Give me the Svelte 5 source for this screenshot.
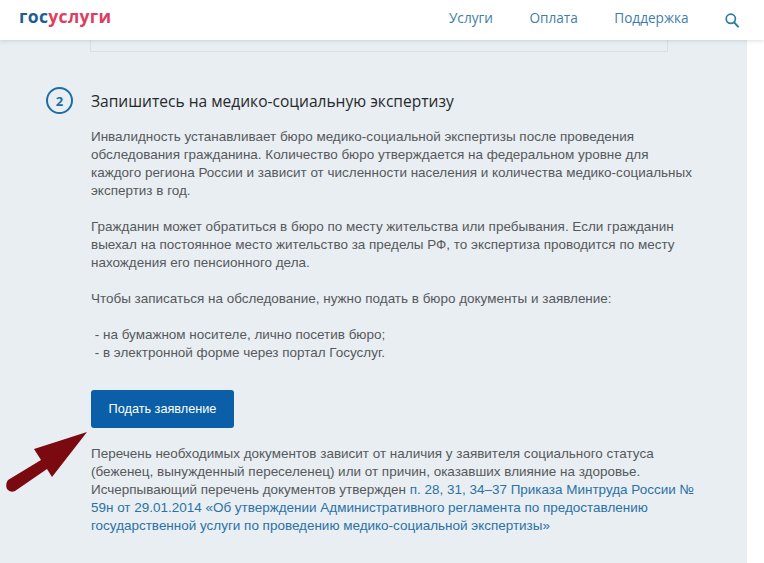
<script>
  const intro = ['Инвалидность устанавливает бюро медико-социальной экспертизы после проведения', 'обследования гражданина. Количество бюро утверждается на федеральном уровне для', 'каждого региона России и зависит от численности населения и количества медико-социальных', 'экспертиз в год.'];
  const place = ['Гражданин может обратиться в бюро по месту жительства или пребывания. Если гражданин', 'выехал на постоянное место жительство за пределы РФ, то экспертиза проводится по месту', 'нахождения его пенсионного дела.'];
</script>

<div class="page">
  <main class="panel">
    <header class="top">
      <div class="logo"><span class="gos">гос</span><span class="usl">услуги</span></div>
      <nav class="nav">
        <span>Услуги</span>
        <span>Оплата</span>
        <span>Поддержка</span>
        <svg class="search" width="14" height="15" viewBox="0 0 14 15" aria-hidden="true">
          <circle cx="5.8" cy="5.8" r="4.6" fill="none" stroke="#2b7ba5" stroke-width="1.7" />
          <path d="M9.2 9.4 L13 13.6" stroke="#2b7ba5" stroke-width="2" stroke-linecap="round" />
        </svg>
      </nav>
    </header>

    <div class="card-end"></div>

    <section class="step">
      <div class="step-head">
        <div class="badge">2</div>
        <h2>Запишитесь на медико-социальную экспертизу</h2>
      </div>

      <div class="body">
        <p>{#each intro as l}<span class="ln">{l}</span>{/each}</p>
        <p>{#each place as l}<span class="ln">{l}</span>{/each}</p>
        <p>Чтобы записаться на обследование, нужно подать в бюро документы и заявление:</p>
        <p class="list">
          <span class="ln">&nbsp;- на бумажном носителе, лично посетив бюро;</span>
          <span class="ln">&nbsp;- в электронной форме через портал Госуслуг.</span>
        </p>
        <button class="cta">Подать заявление</button>
        <p class="foot">
          <span class="ln">Перечень необходимых документов зависит от наличия у заявителя социального статуса</span>
          <span class="ln">(беженец, вынужденный переселенец) или от причин, оказавших влияние на здоровье.</span>
          <span class="ln">Исчерпывающий перечень документов утвержден <a href="#a">п. 28, 31, 34–37 Приказа Минтруда России №</a></span>
          <span class="ln"><a href="#a">59н от 29.01.2014 «Об утверждении Административного регламента по предоставлению</a></span>
          <span class="ln"><a href="#a">государственной услуги по проведению медико-социальной экспертизы»</a></span>
        </p>
      </div>
    </section>

    <svg class="arrow" width="90" height="70" viewBox="0 0 90 70" aria-hidden="true">
      <path d="M87 2 L34 19 L41 30 L8 50 Q5 54 7 59 Q10 63 15 61 L47 39 L52 47 Z" fill="#7a0a10" />
    </svg>
  </main>
</div>

<style>
  :global(body) {
    margin: 0;
    background: #fff;
  }
  .page {
    width: 764px;
    height: 563px;
    overflow: hidden;
    background: #fff;
  }
  .panel {
    position: relative;
    width: 747px;
    height: 563px;
    background: #e9eef2;
    font-family: "Liberation Sans", Arial, sans-serif;
  }
  .top {
    position: relative;
    z-index: 2;
    width: 764px;
    height: 40px;
    background: #fff;
    box-shadow: 0 1px 4px rgba(70, 90, 110, 0.2);
    display: flex;
    align-items: center;
    justify-content: space-between;
    box-sizing: border-box;
    padding: 0 25px 5px 19px;
  }
  .logo {
    font-family: "Open Sans", sans-serif;
    font-weight: 700;
    font-size: 17.5px;
    letter-spacing: 0.35px;
    line-height: 1;
    margin-bottom: 2px;
  }
  .gos { color: #1a5e96; }
  .usl { color: #dd3e5f; }
  .nav {
    display: flex;
    align-items: center;
    gap: 36.5px;
    font-family: "Open Sans", sans-serif;
    font-size: 13.6px;
    color: #3f7ea6;
  }
  .search { margin-top: 5px; }
  .card-end {
    width: 578px;
    margin-left: 90px;
    border: 1px solid #d9dfe4;
    border-top: 0;
    box-sizing: border-box;
    height: 12px;
  }
  .step {
    padding: 35px 0 0 46px;
  }
  .step-head {
    display: flex;
    align-items: center;
    gap: 18px;
  }
  .badge {
    width: 27px;
    height: 27px;
    box-sizing: border-box;
    border: 2px solid #1c6ea4;
    border-radius: 50%;
    color: #1c6ea4;
    font-family: "Open Sans", sans-serif;
    font-weight: 700;
    font-size: 13px;
    display: flex;
    align-items: center;
    justify-content: center;
  }
  h2 {
    margin: 0;
    font-family: "Open Sans", sans-serif;
    font-weight: 400;
    font-size: 15.55px;
    line-height: 20px;
    color: #26292c;
  }
  .body {
    padding: 14px 0 0 45px;
    font-size: 13.48px;
    line-height: 18px;
    color: #55595c;
  }
  p { margin: 0 0 18px; }
  .ln { display: block; white-space: nowrap; }
  .list { margin-bottom: 0; }
  .cta {
    display: block;
    width: 143px;
    height: 38px;
    margin-top: 28px;
    padding: 0;
    border: 0;
    border-radius: 3px;
    background: #0a5fa8;
    color: #fff;
    font-family: "Liberation Sans", Arial, sans-serif;
    font-size: 12.7px;
  }
  .foot { margin-top: 17px; }
  a { color: #2a72a6; text-decoration: none; }
  .arrow {
    position: absolute;
    left: 0;
    top: 430px;
  }
</style>
